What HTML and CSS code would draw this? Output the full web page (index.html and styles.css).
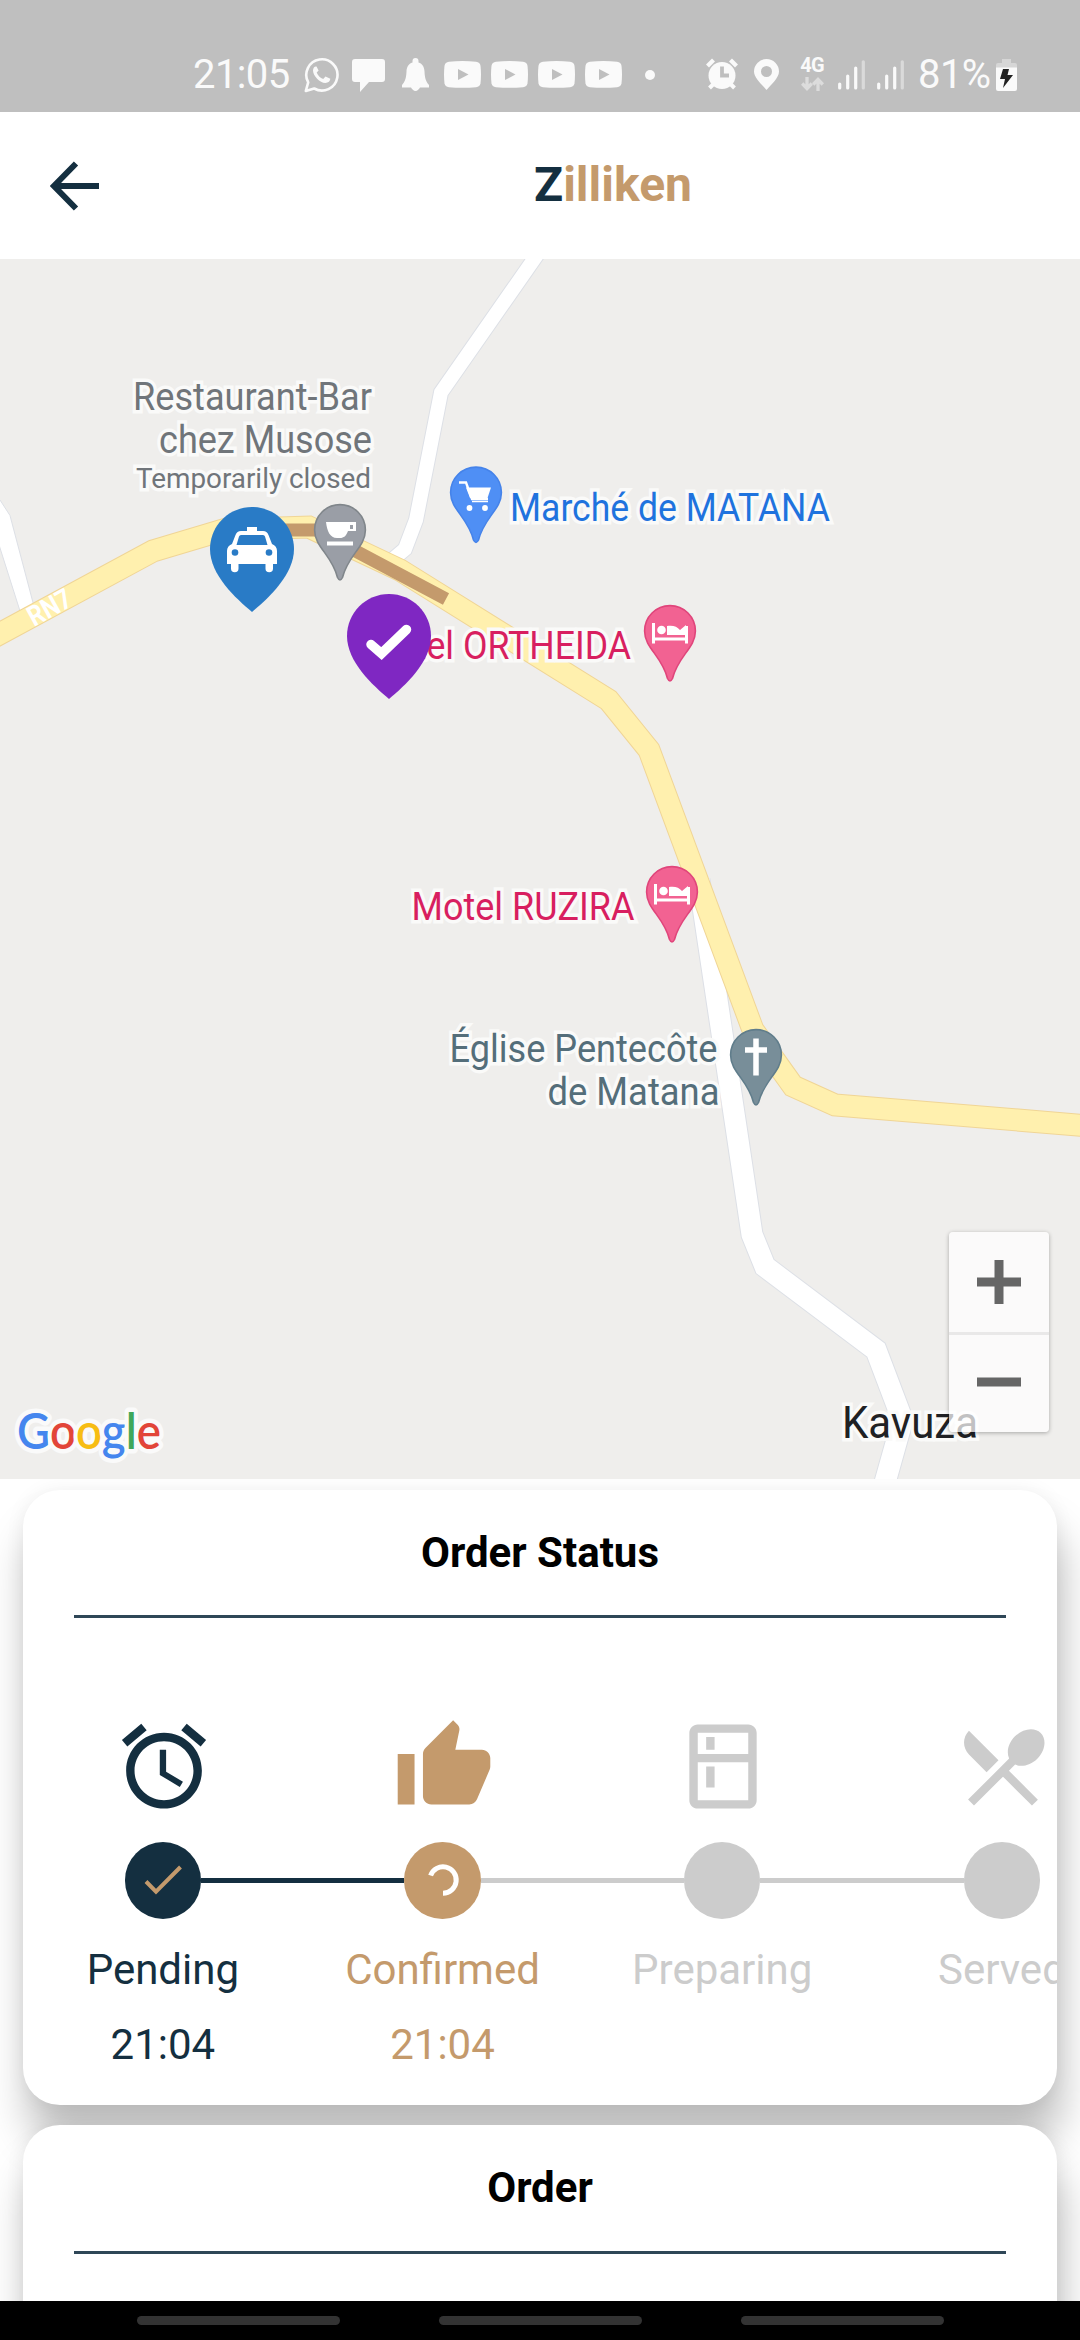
FILE: index.html
```html
<!DOCTYPE html>
<html lang="en">
<head>
<meta charset="utf-8">
<title>Zilliken</title>
<link rel="stylesheet" href="styles.css">
</head>
<body>
<div class="screen">
  <div class="status">
    <div class="status-left">
      <span class="clock">21:05</span>
      <svg width="35" height="36" viewBox="0 0 35 36" fill="none" stroke="#fafafa" stroke-width="2.6"><path d="M1.8 34l2.4-8.6A15.6 15.6 0 1 1 10.200 31.500Z" stroke-linejoin="round"/><path d="M12.500 9.500c-1.500-.6-3.500 1-3.500 4 0 5.500 7 12.500 12.300 12.500 3 0 5-2 5-4.200l-4.800-2.300-2.300 2.600c-3-1-5.500-3.700-6.500-6.500l1.900-2z" fill="#fafafa" stroke="none"/></svg>
      <svg width="33" height="36" viewBox="0 0 33 36" fill="#fafafa"><path d="M3 2h27a3 3 0 0 1 3 3v17a3 3 0 0 1-3 3H17L8 35v-10H3a3 3 0 0 1-3-3V5a3 3 0 0 1 3-3z"/></svg>
      <svg class="bell" width="27" height="36" viewBox="0 0 27 36" fill="#fafafa"><path d="M13.500 1a3 3 0 0 1 3 3v1.500c4 1.300 5.800 4.500 6 9 .3 7 1.500 10 4.500 13.500v2.500h-9c-1 1.500-2.500 3.500-4.500 3.500S10 32 9 30.500H0V28c3-3.500 4.200-6.500 4.500-13.500.2-4.500 2-7.700 6-9V4a3 3 0 0 1 3-3z"/></svg>
      <svg class="yt" width="37" height="27" viewBox="0 0 37 27"><path d="M5 .7Q18.500-.6 32 .7q4 .5 4.500 4 1 9 0 17.500-.5 3.600-4.500 4-13.500 1.300-27 0-4-.4-4.500-4-1-8.500 0-17.500Q1 1.200 5 .7z" fill="#fafafa"/><path d="M14 8l10.500 5.500L14 19z" fill="#bfbfbf"/></svg>
      <svg width="37" height="27" viewBox="0 0 37 27"><path d="M5 .7Q18.500-.6 32 .7q4 .5 4.500 4 1 9 0 17.500-.5 3.600-4.500 4-13.500 1.300-27 0-4-.4-4.500-4-1-8.500 0-17.500Q1 1.200 5 .7z" fill="#fafafa"/><path d="M14 8l10.500 5.500L14 19z" fill="#bfbfbf"/></svg>
      <svg width="37" height="27" viewBox="0 0 37 27"><path d="M5 .7Q18.500-.6 32 .7q4 .5 4.500 4 1 9 0 17.500-.5 3.600-4.500 4-13.500 1.300-27 0-4-.4-4.500-4-1-8.500 0-17.500Q1 1.200 5 .7z" fill="#fafafa"/><path d="M14 8l10.500 5.500L14 19z" fill="#bfbfbf"/></svg>
      <svg width="37" height="27" viewBox="0 0 37 27"><path d="M5 .7Q18.500-.6 32 .7q4 .5 4.500 4 1 9 0 17.500-.5 3.600-4.500 4-13.500 1.300-27 0-4-.4-4.500-4-1-8.500 0-17.500Q1 1.200 5 .7z" fill="#fafafa"/><path d="M14 8l10.500 5.500L14 19z" fill="#bfbfbf"/></svg>
      <span class="more-dot"></span>
    </div>
    <div class="status-right">
      <svg width="32" height="36" viewBox="0 0 32 36" fill="none" stroke="#fafafa"><circle cx="16" cy="18.500" r="13.500" fill="#fafafa" stroke="none"/><path d="M1.500 9L7.500 3M24.500 3L30.500 9" stroke-width="4.200"/><path d="M3.500 31l4-4M28.500 31l-4-4" stroke-width="4"/><path d="M16 9.500v9h7" stroke="#bfbfbf" stroke-width="3.800"/></svg>
      <svg width="25" height="36" viewBox="0 0 25 36"><path fill="#fafafa" fill-rule="evenodd" d="M12.500 2A12.500 12.500 0 0 1 25 14.500C25 21 17 27.500 12.500 33 8 27.500 0 21 0 14.500A12.500 12.500 0 0 1 12.500 2zm0 7a5.500 5.500 0 1 0 0 11 5.500 5.500 0 0 0 0-11z"/></svg>
      <div class="net"><span>4G</span><svg width="23" height="14" viewBox="0 0 23 14" fill="none" stroke="#dcdcdc" stroke-width="3.300"><path d="M6 0v11M1.200 6.500L6 11.500l4.800-5M17 14V3M12.200 7.500L17 2.500l4.800 5"/></svg></div>
      <svg class="signal" width="27" height="30" viewBox="0 0 27 30" stroke="#fafafa" stroke-width="3.200" stroke-linecap="round"><path d="M1.700 24v4M9.700 16v12M17.700 8v20"/><path d="M25.300 1.800V28" stroke="#dadada"/></svg>
      <svg class="signal2" width="27" height="30" viewBox="0 0 27 30" stroke="#fafafa" stroke-width="3.200" stroke-linecap="round"><path d="M1.700 24v4M9.700 16v12M17.700 8v20"/><path d="M25.300 1.800V28" stroke="#dadada"/></svg>
      <span class="percent">81%</span>
      <svg width="21" height="34" viewBox="0 0 21 34"><path d="M6 1h9v4h4a2 2 0 0 1 2 2v3H0V7a2 2 0 0 1 2-2h4z" fill="#d6d6d6"/><path d="M0 9.500h21V31a2 2 0 0 1-2 2H2a2 2 0 0 1-2-2z" fill="#fafafa"/><path d="M7 11h6l-1.500 6H17L7 30l2-9H4z" fill="#222"/></svg>
    </div>
  </div>

  <header class="header">
    <svg width="49" height="50" viewBox="0 0 49 50" fill="none" stroke="#142f40" stroke-width="6"><path d="M26 2.500L4 25l22 22.500M4 25h45"/></svg>
    <h1><span>Z</span>illiken</h1>
  </header>

  <div class="map">
    <svg class="map-canvas" width="1080" height="1220" viewBox="0 259 1080 1220">
      <defs>
        <path id="pin" d="M0-25.400C14-25.400 25.400-14 25.400 0 25.400 17 8 25 2.500 47.500Q0 52.500-2.500 47.500C-8 25-25.400 17-25.400 0-25.400-14-14-25.400 0-25.400z"/>
        <path id="marker" d="M0-42C23.200-42 42-23.200 42 0 42 26 16 49.500 0 63-16 49.500-42 26-42 0-42-23.200-23.200-42 0-42z"/>
        <g id="bed" fill="none" stroke="#fff"><path d="M-16.500-8v20.500M16.500-5v17.500M-16.500 8h33" stroke-width="3"/><circle cx="-8.500" cy="-1" r="4.300" fill="#fff" stroke="none"/><path d="M-3-5c6-1 10 .5 13 4l6-5v10H-3z" fill="#fff" stroke="none"/></g>
      </defs>
      <g fill="none" stroke-linejoin="miter">
        <path d="M-5 495L0 500l10 15.500 23.500 89L20 611 0 548-5 530z" fill="#fff" stroke="#dde0e6"/>
        <g stroke="#dde0e6">
          <path d="M539 252L441 392.500 416 520 405 549 385 566" stroke-width="16"/>
          <path d="M699 880L738 1140 752 1234.500 765 1266.500 876 1350 902.500 1420 884 1486" stroke-width="23"/>
        </g>
        <g stroke="#fff">
          <path d="M539 252L441 392.500 416 520 405 549 385 566" stroke-width="14"/>
          <path d="M699 880L738 1140 752 1234.500 765 1266.500 876 1350 902.500 1420 884 1486" stroke-width="21"/>
        </g>
        <path d="M-10 639L153 551 225 529.500 309 527 400 570 608.500 700 649 750 753 1030 793 1086 835 1105 1090 1126" stroke="#f0d596" stroke-width="23"/>
        <path d="M-10 639L153 551 225 529.500 309 527 400 570 608.500 700 649 750 753 1030 793 1086 835 1105 1090 1126" stroke="#fff0ae" stroke-width="21"/>
        <path d="M252 530H316L446 599" stroke="#c49a6c" stroke-width="13"/>
      </g>
      <text class="road-name" transform="translate(34 627) rotate(-29)" textLength="46" lengthAdjust="spacingAndGlyphs">RN7</text>

      <g class="place">
        <g fill="#70757a">
          <text x="133" y="410" textLength="239" lengthAdjust="spacingAndGlyphs">Restaurant-Bar</text>
          <text x="159" y="453" textLength="213" lengthAdjust="spacingAndGlyphs">chez Musose</text>
          <text class="note" x="136" y="488" textLength="235" lengthAdjust="spacingAndGlyphs">Temporarily closed</text>
        </g>
        <text fill="#1f73de" x="510" y="521" textLength="320" lengthAdjust="spacingAndGlyphs">Marché de MATANA</text>
        <g fill="#d81f60">
          <text x="369" y="659" textLength="262" lengthAdjust="spacingAndGlyphs">Hotel ORTHEIDA</text>
          <text x="411.500" y="920" textLength="223" lengthAdjust="spacingAndGlyphs">Motel RUZIRA</text>
        </g>
        <g fill="#546e7a">
          <text x="449.500" y="1061.500" textLength="268" lengthAdjust="spacingAndGlyphs">Église Pentecôte</text>
          <text x="547.500" y="1104.500" textLength="172" lengthAdjust="spacingAndGlyphs">de Matana</text>
        </g>
        <text class="town" fill="#202124" x="842" y="1438" textLength="136" lengthAdjust="spacingAndGlyphs">Kavuza</text>
      </g>

      <g transform="translate(340 530)"><use href="#pin" fill="#9a9ea6" stroke="#80868b" stroke-width="1.600"/><path d="M-14-8h30v9H8c-2 5-4 7-8 7h-3c-7 0-10-7-11-16zM10-5v4h3v-4z" fill="#fff" fill-rule="evenodd"/><path d="M-13 13.500h26" stroke="#fff" stroke-width="4"/></g>
      <g transform="translate(476 492.500)"><use href="#pin" fill="#4f8ff5" stroke="#4583ea" stroke-width="1.600"/><path d="M-17-10h7l6 16.500h16" fill="none" stroke="#fff" stroke-width="2.400"/><path d="M-10-5h25l-3.500 10.500H-6z" fill="#fff"/><path d="M-4 9h16" stroke="#fff" stroke-width="1.500"/><circle cx="-6.500" cy="15.500" r="2.900" fill="#fff"/><circle cx="9" cy="15.500" r="2.900" fill="#fff"/></g>
      <g transform="translate(670 631)"><use href="#pin" fill="#f26292" stroke="#e0457b" stroke-width="1.600"/><use href="#bed"/></g>
      <g transform="translate(672 892)"><use href="#pin" fill="#f26292" stroke="#e0457b" stroke-width="1.600"/><use href="#bed"/></g>
      <g transform="translate(756 1055)"><use href="#pin" fill="#788e99" stroke="#607d8b" stroke-width="1.600"/><path d="M0-16.500v37M-11-5h22" stroke="#fff" stroke-width="5.500"/></g>

      <g transform="translate(252 549)"><use href="#marker" fill="#297bc6"/><path fill="#fff" fill-rule="evenodd" d="M-5-22H5v4h6q4 0 5.500 4L20-5q5 2 5 7v13h-4v4.500a3.700 3.700 0 0 1-7.500 0V15h-27v4.500a3.700 3.700 0 0 1-7.500 0V15h-4V2q0-5 5-7l3.500-9q1.500-4 5.500-4h6zM-11-14q-1.500 0-2 1.500L-15.500-4h31L13-12.500q-.5-1.500-2-1.500z"/><circle cx="-17" cy="3.500" r="3.300" fill="#297bc6"/><circle cx="17" cy="3.500" r="3.300" fill="#297bc6"/></g>
      <g transform="translate(389 636)"><use href="#marker" fill="#7f27c2"/><path d="M-18 8.500L-7.500 17.500 17.500-6.500" fill="none" stroke="#fff" stroke-width="9.500" stroke-linecap="round"/></g>

      <text class="google" x="17" y="1449" textLength="144" lengthAdjust="spacingAndGlyphs"><tspan fill="#4586ee">G</tspan><tspan fill="#e24539">o</tspan><tspan fill="#f7bd13">o</tspan><tspan fill="#4586ee">g</tspan><tspan fill="#3fa75a">l</tspan><tspan fill="#e24539">e</tspan></text>
    </svg>
    <div class="zoom">
      <div class="zoom-btn"><svg width="44" height="44" viewBox="0 0 44 44" stroke="#666" stroke-width="9"><path d="M0 22h44M22 0v44"/></svg></div>
      <div class="zoom-btn"><svg width="44" height="44" viewBox="0 0 44 44" stroke="#666" stroke-width="9"><path d="M0 22h44"/></svg></div>
    </div>
  </div>

  <main class="content">
    <section class="card card-status">
      <h2>Order Status</h2>
      <div class="rule"></div>
      <div class="steps">
        <div class="step done">
          <svg class="icon" viewBox="0 0 24 24"><path d="M22 5.720l-4.600-3.860-1.290 1.530 4.600 3.860L22 5.720zM7.880 3.390L6.600 1.860 2 5.710l1.290 1.530 4.590-3.850zM12.500 8H11v6l4.750 2.850.75-1.230-4-2.370V8zM12 4c-4.970 0-9 4.030-9 9s4.020 9 9 9c4.970 0 9-4.030 9-9s-4.030-9-9-9zm0 16c-3.870 0-7-3.130-7-7s3.130-7 7-7 7 3.130 7 7-3.130 7-7 7z"/></svg>
          <div class="track"><i class="line none"></i><span class="dot"><svg width="40" height="32" viewBox="0 0 40 32" fill="none" stroke="#c49a6c" stroke-width="4"><path d="M3 17.500l10 10.200L37.500 3"/></svg></span><i class="line"></i></div>
          <p>Pending</p>
          <p>21:04</p>
        </div>
        <div class="step current">
          <svg class="icon" viewBox="0 0 24 24"><path d="M1 21h4V9H1v12zm22-11c0-1.100-.9-2-2-2h-6.310l.95-4.570.03-.32c0-.41-.17-.79-.44-1.060L14.170 1 7.590 7.590C7.220 7.950 7 8.450 7 9v10c0 1.100.9 2 2 2h9c.83 0 1.540-.5 1.840-1.220l3.020-7.050c.09-.23.14-.47.14-.73v-2z"/></svg>
          <div class="track"><i class="line past"></i><span class="dot"><svg width="34" height="34" viewBox="0 0 34 34" fill="none" stroke="#fff" stroke-width="5"><path d="M4.600 12.500A13.200 13.200 0 1 1 17 30.200"/></svg></span><i class="line next"></i></div>
          <p>Confirmed</p>
          <p>21:04</p>
        </div>
        <div class="step">
          <svg class="icon" viewBox="0 0 24 24"><path d="M18 2.010L6 2c-1.100 0-2 .89-2 2v16c0 1.100.9 2 2 2h12c1.100 0 2-.9 2-2V4c0-1.110-.9-1.990-2-1.990zM18 20H6v-9.020h12V20zm0-11H6V4h12v5zM8 5h2v3H8zm0 7h2v5H8z"/></svg>
          <div class="track"><i class="line"></i><span class="dot"></span><i class="line"></i></div>
          <p>Preparing</p>
        </div>
        <div class="step">
          <svg class="icon" viewBox="0 0 24 24"><path d="M8.100 13.340l2.830-2.830L3.910 3.500c-1.560 1.560-1.560 4.090 0 5.660l4.190 4.180zm6.780-1.810c1.530.71 3.680.21 5.270-1.380 1.910-1.910 2.280-4.650.81-6.120-1.460-1.460-4.200-1.100-6.120.81-1.590 1.590-2.090 3.740-1.380 5.270L3.700 19.870l1.410 1.410L12 14.410l6.880 6.880 1.410-1.410L13.410 13l1.470-1.470z"/></svg>
          <div class="track"><i class="line"></i><span class="dot"></span><i class="line none"></i></div>
          <p>Served</p>
        </div>
      </div>
    </section>
    <section class="card card-order">
      <h2>Order</h2>
      <div class="rule"></div>
    </section>
  </main>

  <nav class="nav"><i></i><i></i><i></i></nav>
</div>
</body>
</html>
```
FILE: styles.css
```css
* { box-sizing: border-box; }
body { margin: 0; background: #fff; font-family: Roboto, "Liberation Sans", sans-serif; }
h1, h2, p { margin: 0; }
svg { display: block; flex: none; }

.screen { width: 1080px; height: 2340px; overflow: hidden; display: flex; flex-direction: column; background: #fff; }

/* status bar */
.status { flex: none; height: 112px; padding: 37px 63px 0 193px; background: #bfbfbf; color: #fafafa; display: flex; justify-content: space-between; }
.status-left, .status-right { display: flex; align-items: center; height: 75px; }
.status-left > svg, .status-right > svg { margin-left: 13px; }
.status-left svg + svg { margin-left: 10px; }
.status-left svg:nth-of-type(2) { margin-left: 13px; }
.status-left svg.bell { margin-left: 17px; }
.status-left svg.yt { margin-left: 15px; }
.clock, .percent { font-size: 40px; line-height: 47px; letter-spacing: -0.6px; }
.clock { width: 98px; }
.more-dot { width: 10px; height: 10px; border-radius: 50%; background: #fafafa; margin-left: 23px; }
.status-right svg:nth-of-type(2) { margin-left: 16px; }
.net { width: 24px; margin-left: 21px; display: flex; flex-direction: column; align-items: center; gap: 4px; }
.net span { font-size: 20px; line-height: 15px; font-weight: 700; letter-spacing: -0.8px; }
.status-right .signal { margin-left: 14px; }
.status-right .signal2 { margin-left: 12px; }
.percent { width: 72px; margin-left: 14px; white-space: nowrap; }
.status-right .percent + svg { margin-left: 6px; }

/* app header */
.header { flex: none; height: 147px; padding: 0 50px; display: flex; align-items: center; background: #fff; }
.header h1 { flex: 1; padding: 0 0 2px 97px; text-align: center; font-size: 48px; line-height: 55px; font-weight: 700; color: #c49a6c; }
.header h1 span { color: #142f40; }

/* map */
.map { flex: none; position: relative; height: 1220px; background: #efeeec; overflow: hidden; }
.place text { font-size: 38px; stroke: #fafaf9; stroke-width: 7px; stroke-linejoin: miter; paint-order: stroke; }
.place .note { font-size: 28px; }
.place .town { font-size: 44px; }
.road-name { font-size: 28px; font-weight: 700; fill: #fff; }
.google { font-family: Lato, sans-serif; font-weight: 600; font-size: 49px; stroke: #fafafa; stroke-width: 9px; stroke-linejoin: round; paint-order: stroke; }
.zoom { position: absolute; right: 31px; bottom: 47px; width: 100px; height: 200px; border-radius: 4px; background: rgba(255, 255, 255, 0.72); box-shadow: 0 1px 4px rgba(0, 0, 0, 0.3); display: flex; flex-direction: column; }
.zoom-btn { flex: 1; display: flex; align-items: center; justify-content: center; }
.zoom-btn + .zoom-btn { box-shadow: inset 0 3px 0 rgba(0, 0, 0, 0.07); }

/* cards */
.content { flex: 1; min-height: 0; padding: 11px 23px 0; display: flex; flex-direction: column; gap: 20.500px; overflow: hidden; }
.card { flex: none; background: #fff; border-radius: 37px; box-shadow: 0 0 20px rgba(0, 0, 0, 0.06), 5px 38px 42px rgba(0, 0, 0, 0.25); padding-top: 39px; }
.card-status { height: 614.500px; }
.card-order { height: 600px; }
.card h2 { font-size: 42px; line-height: 48px; font-weight: 700; text-align: center; color: #000; }
.rule { margin: 38px 51px 0; height: 3px; background: #2f4757; }
.card-order .rule { margin-top: 39px; }

.steps { margin-top: 98px; display: flex; overflow: hidden; color: #ccc; }
.step { flex: none; width: 279.700px; display: flex; flex-direction: column; align-items: center; }
.step.done { color: #142f40; }
.step.current { color: #c49a6c; }
.icon { width: 102px; height: 101px; fill: currentColor; margin-left: 2px; }
.track { width: 100%; margin: 25px 0 26px; display: flex; align-items: center; }
.dot { flex: none; width: 76.500px; height: 76.500px; border-radius: 50%; background: currentColor; display: flex; align-items: center; justify-content: center; }
.line { flex: 1; height: 5.500px; background: currentColor; }
.line.none { background: none; }
.line.past { background: #142f40; }
.line.next { background: #ccc; }
.step p { font-size: 42px; line-height: 49px; }
.step p + p { margin-top: 26px; }

/* system navigation */
.nav { flex: none; height: 39px; background: #000; display: flex; justify-content: center; gap: 99px; padding-top: 15px; position: relative; }
.nav i { width: 203px; height: 9px; border-radius: 5px; background: #333; }
```
